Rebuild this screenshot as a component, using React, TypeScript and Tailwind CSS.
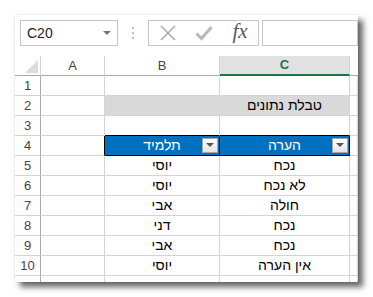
import { Fragment } from 'react'

const rows: [string, string][] = [
  ['יוסי', 'נכח'],
  ['יוסי', 'לא נכח'],
  ['אבי', 'חולה'],
  ['דני', 'נכח'],
  ['אבי', 'נכח'],
  ['יוסי', 'אין הערה'],
]

function FilterButton() {
  return (
    <div className="absolute right-[1px] top-[2px] w-[16px] h-[15px] bg-gradient-to-b from-white to-[#e4e4e4] border border-[#a6a6a6] flex items-center justify-center">
      <svg width="8" height="5" viewBox="0 0 8 5">
        <path d="M0 0 L8 0 L4 4 Z" fill="#555" />
      </svg>
    </div>
  )
}

function RowNum({ n }: { n?: number }) {
  return (
    <div className="h-[20px] border-r border-r-[#ababab] border-b border-b-[#d4d4d4] flex items-center justify-center text-[13px] text-[#444]">
      {n}
    </div>
  )
}

function Cell({ children, className = '' }: { children?: React.ReactNode; className?: string }) {
  return (
    <div dir="rtl" className={`h-[20px] border-r border-b border-[#d4d4d4] flex items-center justify-center text-[14px] text-black ${className}`}>
      {children}
    </div>
  )
}

export default function App() {
  return (
    <div className="w-[373px] h-[297px] bg-white pt-[15px] pl-[15px] font-['Liberation_Sans','DejaVu_Sans',sans-serif]">
      <div className="w-[343px] h-[267px] bg-white overflow-hidden shadow-[0_0_2px_rgba(0,0,0,0.15),5px_5px_6px_rgba(0,0,0,0.6)]">
        {/* formula bar */}
        <div className="h-[41px] flex items-start pt-[5px] pl-[5px]">
          <div className="w-[102px] h-[26px] border border-[#c6c6c6] flex items-center justify-between pl-[6px] pr-[6px]">
            <span className="text-[14px] text-[#222]">C20</span>
            <svg width="8" height="5" viewBox="0 0 8 5">
              <path d="M0 0 L8 0 L4 4 Z" fill="#777" />
            </svg>
          </div>
          <div className="w-[31px] h-[26px] flex flex-col items-center justify-center gap-[3px]">
            <div className="w-[2px] h-[2px] bg-[#bdbdbd]" />
            <div className="w-[2px] h-[2px] bg-[#bdbdbd]" />
            <div className="w-[2px] h-[2px] bg-[#bdbdbd]" />
          </div>
          <div className="w-[111px] h-[26px] border border-[#c6c6c6] flex items-center">
            <div className="w-[37px] flex justify-center">
              <svg width="16" height="16" viewBox="0 0 16 16">
                <path d="M1 1 L15 15 M15 1 L1 15" stroke="#a8a8a8" strokeWidth="1.5" />
              </svg>
            </div>
            <div className="w-[36px] flex justify-center">
              <svg width="18" height="16" viewBox="0 0 18 16">
                <path d="M1.5 8.5 L6.5 13.5 L16.5 2" stroke="#b8b8b8" strokeWidth="3" fill="none" />
              </svg>
            </div>
            <div className="w-[36px] flex justify-center">
              <span className="font-['Liberation_Serif',serif] italic text-[21px] leading-none text-[#595959] -mt-[3px]">fx</span>
            </div>
          </div>
          <div className="ml-[3px] w-[100px] h-[26px] border border-[#c6c6c6]" />
        </div>

        {/* grid */}
        <div className="grid grid-cols-[26px_64px_115px_130px_8px]">
          {/* column headers */}
          <div className="h-[20px] border-r border-r-[#d4d4d4] border-b border-b-[#ababab] relative">
            <svg className="absolute right-[2px] bottom-[2px]" width="13" height="13" viewBox="0 0 13 13">
              <path d="M13 0 L13 13 L0 13 Z" fill="#dcdcdc" />
            </svg>
          </div>
          <div className="h-[20px] border-r border-r-[#d4d4d4] border-b border-b-[#ababab] flex items-center justify-center text-[13px] text-[#444]">A</div>
          <div className="h-[20px] border-r border-r-[#d4d4d4] border-b border-b-[#ababab] flex items-center justify-center text-[13px] text-[#444]">B</div>
          <div className="h-[20px] bg-[#e1e1e1] border-r border-r-[#d4d4d4] border-b-2 border-b-[#217346] flex items-center justify-center text-[13px] font-bold text-[#217346]">C</div>
          <div className="h-[20px] border-b border-b-[#ababab]" />

          {/* row 1 */}
          <RowNum n={1} />
          <Cell />
          <Cell />
          <Cell />
          <Cell />

          {/* row 2 */}
          <RowNum n={2} />
          <Cell />
          <div className="h-[20px] bg-[#d9d9d9] border-b border-[#d4d4d4]" />
          <div dir="rtl" className="h-[20px] bg-[#d9d9d9] border-r border-b border-[#d4d4d4] flex items-center justify-center text-[14px] text-black">
            טבלת נתונים
          </div>
          <Cell />

          {/* row 3 */}
          <RowNum n={3} />
          <Cell />
          <Cell className="border-b-black" />
          <Cell className="border-b-black" />
          <Cell />

          {/* row 4 - table header */}
          <RowNum n={4} />
          <Cell className="border-r-black" />
          <div dir="rtl" className="relative h-[20px] bg-[#0070c0] border-r border-b border-black flex items-center justify-center text-[14px] text-white">
            תלמיד
            <FilterButton />
          </div>
          <div dir="rtl" className="relative h-[20px] bg-[#0070c0] border-r border-b border-black flex items-center justify-center text-[14px] text-white">
            הערה
            <FilterButton />
          </div>
          <Cell />

          {rows.map(([name, note], i) => (
            <Fragment key={i}>
              <RowNum n={i + 5} />
              <Cell />
              <Cell>{name}</Cell>
              <Cell>{note}</Cell>
              <Cell />
            </Fragment>
          ))}

          {/* partial row 11, clipped by the window */}
          <RowNum />
          <Cell />
          <Cell />
          <Cell />
          <Cell />
        </div>
      </div>
    </div>
  )
}
